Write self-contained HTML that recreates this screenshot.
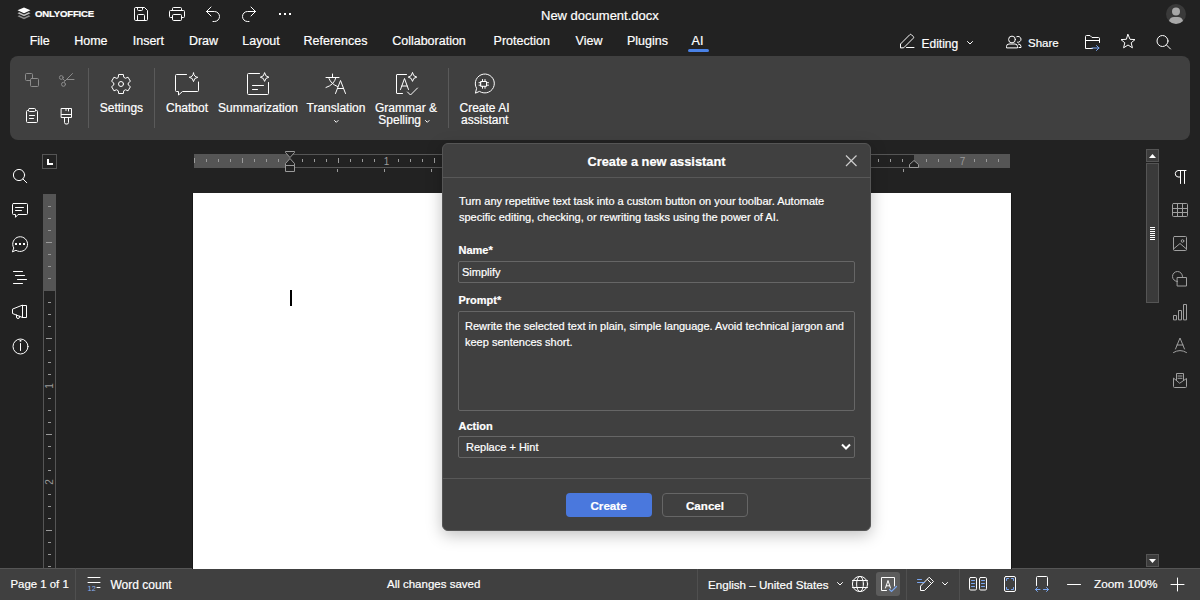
<!DOCTYPE html>
<html><head><meta charset="utf-8">
<style>
*{margin:0;padding:0;box-sizing:border-box}
html,body{width:1200px;height:600px;overflow:hidden;background:#222;font-family:"Liberation Sans",sans-serif;color:#fff}
.a{position:absolute}
.t{position:absolute;white-space:nowrap;line-height:1;-webkit-text-stroke:0.2px #fff}
.c{width:120px;text-align:center}
svg{position:absolute;overflow:visible}
.ic{fill:none;stroke:#fff;stroke-width:1;stroke-linecap:round;stroke-linejoin:round}
</style></head><body>
<!-- TOP HEADER -->
<div id="hdr">
  <svg class="a" style="left:17px;top:7px" width="14" height="13" viewBox="0 0 14 13">
    <path d="M7 0.5 L13.5 3.3 L7 6.2 L0.5 3.3 Z" fill="#fff"/>
    <path d="M2.2 5.3 L7 7.4 L11.8 5.3 L13.5 6.3 L7 9.2 L0.5 6.3 Z" fill="#ddd" opacity=".85"/>
    <path d="M2.2 8.3 L7 10.4 L11.8 8.3 L13.5 9.3 L7 12.2 L0.5 9.3 Z" fill="#bbb" opacity=".7"/>
  </svg>
  <div class="t" style="left:35px;top:9.1px;font-size:9.6px;font-weight:bold;letter-spacing:-0.2px">ONLYOFFICE</div>
  <div class="t" style="left:541px;top:9px;font-size:13px;">New document.docx</div>
</div>
<!-- MENU -->
<div class="t c" style="left:-20.25px;top:35px;font-size:12.5px">File</div>
<div class="t c" style="left:30.90px;top:35px;font-size:12.5px">Home</div>
<div class="t c" style="left:88.35px;top:35px;font-size:12.5px">Insert</div>
<div class="t c" style="left:143.50px;top:35px;font-size:12.5px">Draw</div>
<div class="t c" style="left:201.00px;top:35px;font-size:12.5px">Layout</div>
<div class="t c" style="left:275.50px;top:35px;font-size:12.5px">References</div>
<div class="t c" style="left:369.00px;top:35px;font-size:12.5px">Collaboration</div>
<div class="t c" style="left:461.70px;top:35px;font-size:12.5px">Protection</div>
<div class="t c" style="left:529.00px;top:35px;font-size:12.5px">View</div>
<div class="t c" style="left:587.50px;top:35px;font-size:12.5px">Plugins</div>
<div class="t c" style="left:637.50px;top:35px;font-size:12.5px">AI</div>
<div class="a" style="left:688px;top:49px;width:21px;height:3px;border-radius:2px;background:#4a82e6"></div>

<div class="t" style="left:921.5px;top:37.7px;font-size:12px">Editing</div>
<div class="t" style="left:1028px;top:37.7px;font-size:11.5px">Share</div>


<!-- HEADER ICONS -->
<svg style="left:0;top:0" width="1200" height="140" viewBox="0 0 1200 140">
 <g class="ic">
  <!-- save -->
  <path d="M134.5 8.5 Q134.5 7.5 135.5 7.5 L144.5 7.5 L147.5 10.5 L147.5 19.5 Q147.5 20.5 146.5 20.5 L135.5 20.5 Q134.5 20.5 134.5 19.5 Z"/>
  <path d="M137.5 7.5 V9.5 Q137.5 10.5 138.5 10.5 H141.5 Q142.5 10.5 142.5 9.5 V7.5"/>
  <path d="M137.5 20.5 V15.5 Q137.5 14.5 138.5 14.5 H143.5 Q144.5 14.5 144.5 15.5 V20.5"/>
  <!-- print -->
  <path d="M172.5 10.5 V8.5 Q172.5 7.5 173.5 7.5 H180.5 Q181.5 7.5 181.5 8.5 V10.5"/>
  <path d="M172.5 17.5 H170.5 Q169.5 17.5 169.5 16.5 V11.5 Q169.5 10.5 170.5 10.5 H183.5 Q184.5 10.5 184.5 11.5 V16.5 Q184.5 17.5 183.5 17.5 H181.5"/>
  <path d="M172.5 15.5 Q172.5 14.5 173.5 14.5 H180.5 Q181.5 14.5 181.5 15.5 V19.5 Q181.5 20.5 180.5 20.5 H173.5 Q172.5 20.5 172.5 19.5 Z"/>
  <!-- undo -->
  <path d="M211 7 L206.5 11.5 L211 16 M206.5 11.5 H214.5 A5 5 0 0 1 214.5 21.5 H213"/>
  <!-- redo -->
  <path d="M251 7 L255.5 11.5 L251 16 M255.5 11.5 H247.5 A5 5 0 0 0 247.5 21.5 H249"/>
 </g>
 <g fill="#fff">
  <rect x="279" y="13" width="2" height="2"/><rect x="284" y="13" width="2" height="2"/><rect x="289" y="13" width="2" height="2"/>
 </g>
 <g class="ic">
  <!-- edit pencil -->
  <path d="M900.5 47.5 V44 L909.8 34.7 Q910.6 33.9 911.4 34.7 L913.3 36.6 Q914.1 37.4 913.3 38.2 L904 47.5 Z M906.5 47.5 H914"/>
  <path d="M967.5 41.5 L970 44 L972.5 41.5"/>
  <!-- share people -->
  <circle cx="1012" cy="39.5" r="3.4"/>
  <path d="M1006.5 47.5 V46.5 Q1006.5 44 1009 44 H1015 Q1017.5 44 1017.5 46.5 V47.5 Z"/>
  <path d="M1016.8 36.6 A3 3 0 1 1 1017.5 42.3"/>
  <path d="M1018.5 44 Q1021 44 1021 46.5 V47.5 H1019"/>
  <!-- folder -->
  <path d="M1092.5 48.5 H1085.5 V36.5 Q1085.5 35.5 1086.5 35.5 H1090 L1092 37.5 H1098.5 Q1099.5 37.5 1099.5 38.5 V42.5 M1085.5 40.5 H1099.5"/>
  <!-- star -->
  <path d="M1128 34.5 L1130 39.3 L1135 39.6 L1131.2 42.8 L1132.4 47.8 L1128 45 L1123.6 47.8 L1124.8 42.8 L1121 39.6 L1126 39.3 Z"/>
  <!-- search -->
  <circle cx="1162.5" cy="41" r="5.5"/>
  <path d="M1166.5 45 L1170.5 49"/>
 </g>
 <path d="M1092 48 H1099 M1096.5 45.5 L1099 48 L1096.5 50.5" fill="none" stroke="#7aa6f0" stroke-width="1" stroke-linecap="round" stroke-linejoin="round"/>
 <!-- avatar -->
 <circle cx="1176" cy="14" r="10" fill="#3a3a3a"/>
 <circle cx="1176" cy="11.5" r="4" fill="#a8a8a8"/>
 <path d="M1169 21 Q1170 17 1174 17 H1178 Q1182 17 1183 21 Q1180 24 1176 24 Q1172 24 1169 21 Z" fill="#a8a8a8"/>
</svg>

<!-- TOOLBAR PANEL -->
<div class="a" style="left:10px;top:56px;width:1180px;height:84px;background:#404040;border-radius:8px"></div>
<div class="a" style="left:88px;top:68px;width:1px;height:60px;background:#5a5a5a"></div>
<div class="a" style="left:154px;top:68px;width:1px;height:60px;background:#5a5a5a"></div>
<div class="a" style="left:448px;top:68px;width:1px;height:60px;background:#5a5a5a"></div>

<div class="t c" style="left:61.40px;top:101.5px;font-size:12px">Settings</div>
<div class="t c" style="left:127.00px;top:101.5px;font-size:12px">Chatbot</div>
<div class="t c" style="left:198.00px;top:101.5px;font-size:12px">Summarization</div>
<div class="t c" style="left:276.00px;top:101.5px;font-size:12px">Translation</div>
<div class="t c" style="left:346.00px;top:101.5px;font-size:12px">Grammar &amp;</div>
<div class="t c" style="left:339.70px;top:113.5px;font-size:12px">Spelling</div>
<div class="t c" style="left:424.50px;top:101.5px;font-size:12px">Create AI</div>
<div class="t c" style="left:424.75px;top:113.5px;font-size:12px">assistant</div>



<!-- TOOLBAR ICONS -->
<svg style="left:0;top:0" width="600" height="140" viewBox="0 0 600 140">
 <g class="ic" style="stroke:#8c8c8c">
  <!-- copy disabled -->
  <path d="M30.5 80.5 H26.5 Q25.5 80.5 25.5 79.5 V74.5 Q25.5 73.5 26.5 73.5 H31.5 Q32.5 73.5 32.5 74.5 V78"/>
  <rect x="30.5" y="78.5" width="8" height="8" rx="1"/>
  <!-- cut -->
  <circle cx="61.3" cy="77.5" r="1.9"/>
  <circle cx="63.5" cy="84.3" r="2"/>
  <path d="M63 79 L64.5 80.5 M64.5 81.5 L72.5 73.5 M67.5 79.5 H74"/>
 </g>
 <g class="ic">
  <!-- paste clipboard -->
  <path d="M28.5 110.5 H27.5 Q26.5 110.5 26.5 111.5 V121.5 Q26.5 122.5 27.5 122.5 H36.5 Q37.5 122.5 37.5 121.5 V111.5 Q37.5 110.5 36.5 110.5 H35.5"/>
  <rect x="28.5" y="108.5" width="7" height="3" rx="1"/>
  <path d="M29.5 115.5 H34.5 M29.5 118.5 H33.5"/>
  <!-- format painter -->
  <path d="M61.5 108.5 H71.5 V117.5 H61.5 Z M61.5 114.5 H71.5 M68.5 108.5 V111 M66 108.5 V110.5"/>
  <path d="M64.5 117.5 V122.5 Q64.5 124 66 124 H67 Q68.5 124 68.5 122.5 V117.5"/>
  <!-- gear -->
  <path d="M118.27 77.23 L118.63 74.49 L123.37 74.49 L123.73 77.23 L125.49 78.25 L128.05 77.19 L130.42 81.30 L128.23 82.98 L128.23 85.02 L130.42 86.70 L128.05 90.81 L125.49 89.75 L123.73 90.77 L123.37 93.51 L118.63 93.51 L118.27 90.77 L116.51 89.75 L113.95 90.81 L111.58 86.70 L113.77 85.02 L113.77 82.98 L111.58 81.30 L113.95 77.19 L116.51 78.25 Z"/>
  <circle cx="121" cy="84" r="2.5"/>
  <!-- chatbot -->
  <path d="M186.5 74.5 H176.5 Q175.5 74.5 175.5 75.5 V90.5 Q175.5 91.5 176.5 91.5 H178.5 V95 L182.5 91.5 H197.5 Q198.5 91.5 198.5 90.5 V82"/>
  <path d="M193.5 73 Q194 77 197.8 77.3 Q194 77.6 193.5 81.6 Q193 77.6 189.2 77.3 Q193 77 193.5 73 Z"/>
  <!-- summarization -->
  <path d="M259.5 73.5 H248.5 Q247.5 73.5 247.5 74.5 V93.5 Q247.5 94.5 248.5 94.5 H267.5 Q268.5 94.5 268.5 93.5 V82.5"/>
  <path d="M264.6 73 Q265.1 76.8 268.9 77.2 Q265.1 77.6 264.6 81.4 Q264.1 77.6 260.3 77.2 Q264.1 76.8 264.6 73 Z"/>
  <path d="M252.5 85.5 H263.5 M252.5 89.5 H257.5"/>
  <!-- translation -->
  <path d="M326 77.5 H339 M332.5 74 V77.5 M329 78.5 Q331 84 337.5 86.5 M336 77.5 Q334 85 326 87.5"/>
  <path d="M335.5 93.5 L340.5 80.5 L345.5 93.5 M337.5 88.5 H343.5"/>
  <!-- grammar -->
  <path d="M406.5 74.5 H397 Q396.5 74.5 396.5 75 V93 Q396.5 93.5 397 93.5 H402.5"/>
  <path d="M400.5 89.5 L404.5 78.5 L408.5 89.5 M401.8 86 H407.2"/>
  <path d="M412.5 72.8 Q413 76.6 416.8 77.1 Q413 77.6 412.5 81.4 Q412 77.6 408.2 77.1 Q412 76.6 412.5 72.8 Z"/>
  <path d="M407.5 92 L410.5 95 L417.5 88"/>
  <!-- create ai -->
  <path d="M475.5 92.8 L476.6 88.3 A9.5 9.5 0 1 1 479.8 91.6 Z"/>
  <rect x="481" y="81.5" width="5.5" height="4.8"/>
  <path d="M482.5 79.5 V81.5 M485 79.5 V81.5 M482.5 86.3 V88.3 M485 86.3 V88.3 M479 82.7 H481 M479 85.2 H481 M486.5 82.7 H488.5 M486.5 85.2 H488.5"/>
  <!-- chevrons -->
  <path d="M334.5 120.5 L336.3 122.3 L338.1 120.5 M425.5 120.5 L427.3 122.3 L429.1 120.5"/>
 </g>
</svg>

<!-- STATUS BAR -->
<div class="a" style="left:0;top:568px;width:1200px;height:32px;background:#404040;border-top:1px solid #565656"></div>
<div class="t" style="left:10.5px;top:579.2px;font-size:11.4px">Page 1 of 1</div>
<div class="a" style="left:75px;top:568px;width:1px;height:32px;background:#4f4f4f"></div>
<div class="t" style="left:110.5px;top:579px;font-size:12px">Word count</div>
<div class="t" style="left:387px;top:579.2px;font-size:11.5px">All changes saved</div>
<div class="a" style="left:697px;top:568px;width:1px;height:32px;background:#4f4f4f"></div>
<div class="t" style="left:708px;top:579.2px;font-size:11.6px">English – United States</div>
<div class="a" style="left:906px;top:568px;width:1px;height:32px;background:#4f4f4f"></div>
<div class="a" style="left:959px;top:568px;width:1px;height:32px;background:#4f4f4f"></div>
<div class="t" style="left:1094px;top:579.2px;font-size:11.8px">Zoom 100%</div>


<!-- LEFT SIDEBAR ICONS -->
<svg style="left:0;top:140px" width="60" height="430" viewBox="0 140 60 430">
 <g class="ic">
  <circle cx="19" cy="175" r="5.6"/>
  <path d="M23 179 L26.8 182.8"/>
  <!-- comment -->
  <path d="M13.5 203.5 H26.5 Q27.5 203.5 27.5 204.5 V213.5 Q27.5 214.5 26.5 214.5 H18 L15.5 217.3 V214.5 H13.5 Q12.5 214.5 12.5 213.5 V204.5 Q12.5 203.5 13.5 203.5 Z M15.5 207.5 H23.5 M15.5 210.5 H21.5"/>
  <!-- chat -->
  <path d="M12.5 251.5 L13.8 248 A7.4 7.4 0 1 1 16.3 250.5 Z"/>
  <!-- navigation -->
  <path d="M13.5 271.5 H22.5 M15.5 275.5 H24.5 M17.5 279.5 H26.5 M13.5 283.5 H22.5"/>
  <!-- megaphone -->
  <path d="M12.5 309.5 V313.5 L22.5 317.5 V305.5 Z M22.5 305.5 H26.5 V317.5 H22.5 M16.5 315 V317 Q16.5 318.5 18 318.5 Q19.5 318.5 19.5 317 V316.2"/>
  <!-- info -->
  <circle cx="20.5" cy="346.5" r="7.5"/>
  <path d="M20.5 343.5 V350.5"/>
 </g>
 <g fill="#fff"><rect x="15" y="243" width="2" height="2"/><rect x="19" y="243" width="2" height="2"/><rect x="23" y="243" width="2" height="2"/></g>
 <circle cx="20.5" cy="340.8" r="1" fill="#fff"/>
</svg>

<!-- TAB SELECTOR -->
<div class="a" style="left:42px;top:154px;width:15px;height:15px;border:1px solid #555"></div>
<div class="a" style="left:47px;top:159px;width:2px;height:6px;background:#fff"></div>
<div class="a" style="left:47px;top:163px;width:6px;height:2px;background:#fff"></div>

<!-- TOP RULER -->
<div class="a" style="left:194px;top:154px;width:816px;height:14px;background:#222;border-top:1px solid #555;border-bottom:1px solid #555"></div>
<div class="a" style="left:194px;top:154px;width:96px;height:14px;background:#555"></div>
<div class="a" style="left:914px;top:154px;width:96px;height:14px;background:#555"></div>
<svg style="left:0;top:140px" width="1200" height="40" viewBox="0 140 1200 40" id="rulerT"><rect x="206" y="159" width="1" height="3" fill="#9a9a9a"/><rect x="218" y="159" width="1" height="3" fill="#9a9a9a"/><rect x="230" y="159" width="1" height="3" fill="#9a9a9a"/><rect x="242" y="158" width="1" height="5" fill="#9a9a9a"/><rect x="254" y="159" width="1" height="3" fill="#9a9a9a"/><rect x="266" y="159" width="1" height="3" fill="#9a9a9a"/><rect x="278" y="159" width="1" height="3" fill="#9a9a9a"/><rect x="302" y="159" width="1" height="3" fill="#9a9a9a"/><rect x="314" y="159" width="1" height="3" fill="#9a9a9a"/><rect x="326" y="159" width="1" height="3" fill="#9a9a9a"/><rect x="338" y="158" width="1" height="5" fill="#9a9a9a"/><rect x="350" y="159" width="1" height="3" fill="#9a9a9a"/><rect x="362" y="159" width="1" height="3" fill="#9a9a9a"/><rect x="374" y="159" width="1" height="3" fill="#9a9a9a"/><rect x="398" y="159" width="1" height="3" fill="#9a9a9a"/><rect x="410" y="159" width="1" height="3" fill="#9a9a9a"/><rect x="422" y="159" width="1" height="3" fill="#9a9a9a"/><rect x="434" y="158" width="1" height="5" fill="#9a9a9a"/><rect x="446" y="159" width="1" height="3" fill="#9a9a9a"/><rect x="458" y="159" width="1" height="3" fill="#9a9a9a"/><rect x="470" y="159" width="1" height="3" fill="#9a9a9a"/><rect x="494" y="159" width="1" height="3" fill="#9a9a9a"/><rect x="506" y="159" width="1" height="3" fill="#9a9a9a"/><rect x="518" y="159" width="1" height="3" fill="#9a9a9a"/><rect x="530" y="158" width="1" height="5" fill="#9a9a9a"/><rect x="542" y="159" width="1" height="3" fill="#9a9a9a"/><rect x="554" y="159" width="1" height="3" fill="#9a9a9a"/><rect x="566" y="159" width="1" height="3" fill="#9a9a9a"/><rect x="590" y="159" width="1" height="3" fill="#9a9a9a"/><rect x="602" y="159" width="1" height="3" fill="#9a9a9a"/><rect x="614" y="159" width="1" height="3" fill="#9a9a9a"/><rect x="626" y="158" width="1" height="5" fill="#9a9a9a"/><rect x="638" y="159" width="1" height="3" fill="#9a9a9a"/><rect x="650" y="159" width="1" height="3" fill="#9a9a9a"/><rect x="662" y="159" width="1" height="3" fill="#9a9a9a"/><rect x="686" y="159" width="1" height="3" fill="#9a9a9a"/><rect x="698" y="159" width="1" height="3" fill="#9a9a9a"/><rect x="710" y="159" width="1" height="3" fill="#9a9a9a"/><rect x="722" y="158" width="1" height="5" fill="#9a9a9a"/><rect x="734" y="159" width="1" height="3" fill="#9a9a9a"/><rect x="746" y="159" width="1" height="3" fill="#9a9a9a"/><rect x="758" y="159" width="1" height="3" fill="#9a9a9a"/><rect x="782" y="159" width="1" height="3" fill="#9a9a9a"/><rect x="794" y="159" width="1" height="3" fill="#9a9a9a"/><rect x="806" y="159" width="1" height="3" fill="#9a9a9a"/><rect x="818" y="158" width="1" height="5" fill="#9a9a9a"/><rect x="830" y="159" width="1" height="3" fill="#9a9a9a"/><rect x="842" y="159" width="1" height="3" fill="#9a9a9a"/><rect x="854" y="159" width="1" height="3" fill="#9a9a9a"/><rect x="878" y="159" width="1" height="3" fill="#9a9a9a"/><rect x="890" y="159" width="1" height="3" fill="#9a9a9a"/><rect x="902" y="159" width="1" height="3" fill="#9a9a9a"/><rect x="926" y="159" width="1" height="3" fill="#9a9a9a"/><rect x="938" y="159" width="1" height="3" fill="#9a9a9a"/><rect x="950" y="159" width="1" height="3" fill="#9a9a9a"/><rect x="974" y="159" width="1" height="3" fill="#9a9a9a"/><rect x="986" y="159" width="1" height="3" fill="#9a9a9a"/><rect x="998" y="159" width="1" height="3" fill="#9a9a9a"/><text x="386.5" y="165" font-size="10" fill="#9a9a9a" text-anchor="middle" font-family="Liberation Sans">1</text><text x="482.5" y="165" font-size="10" fill="#9a9a9a" text-anchor="middle" font-family="Liberation Sans">2</text><text x="578.5" y="165" font-size="10" fill="#9a9a9a" text-anchor="middle" font-family="Liberation Sans">3</text><text x="674.5" y="165" font-size="10" fill="#9a9a9a" text-anchor="middle" font-family="Liberation Sans">4</text><text x="770.5" y="165" font-size="10" fill="#9a9a9a" text-anchor="middle" font-family="Liberation Sans">5</text><text x="866.5" y="165" font-size="10" fill="#9a9a9a" text-anchor="middle" font-family="Liberation Sans">6</text><text x="962.5" y="165" font-size="10" fill="#9a9a9a" text-anchor="middle" font-family="Liberation Sans">7</text><rect x="194" y="158" width="1" height="5" fill="#9a9a9a"/><rect x="337" y="169" width="1" height="3" fill="#9a9a9a"/><rect x="384" y="169" width="1" height="3" fill="#9a9a9a"/><rect x="431" y="169" width="1" height="3" fill="#9a9a9a"/><rect x="478" y="169" width="1" height="3" fill="#9a9a9a"/><rect x="526" y="169" width="1" height="3" fill="#9a9a9a"/><rect x="573" y="169" width="1" height="3" fill="#9a9a9a"/><rect x="620" y="169" width="1" height="3" fill="#9a9a9a"/><rect x="667" y="169" width="1" height="3" fill="#9a9a9a"/><rect x="714" y="169" width="1" height="3" fill="#9a9a9a"/><rect x="762" y="169" width="1" height="3" fill="#9a9a9a"/><rect x="809" y="169" width="1" height="3" fill="#9a9a9a"/><rect x="856" y="169" width="1" height="3" fill="#9a9a9a"/><rect x="903" y="169" width="1" height="3" fill="#9a9a9a"/><path d="M285.5 151.5 H294.5 V152.5 L290 157.5 L285.5 152.5 Z M290 158.5 L294.5 163.5 V165.5 H285.5 V163.5 Z M285.5 165.5 H294.5 V171.5 H285.5 Z" fill="#222" stroke="#9a9a9a" stroke-width="1"/><path d="M909.5 167.5 V164.5 L914 160.5 L918.5 164.5 V167.5 Z" fill="#222" stroke="#9a9a9a" stroke-width="1"/></svg>

<!-- LEFT RULER -->
<div class="a" style="left:43px;top:194px;width:13px;height:374px;background:#222;border-left:1px solid #555;border-right:1px solid #555"></div>
<div class="a" style="left:43px;top:194px;width:13px;height:97px;background:#555"></div>
<svg style="left:0;top:190px" width="60" height="380" viewBox="0 190 60 380" id="rulerL"><rect x="48" y="206" width="3" height="1" fill="#9a9a9a"/><rect x="48" y="218" width="3" height="1" fill="#9a9a9a"/><rect x="48" y="230" width="3" height="1" fill="#9a9a9a"/><rect x="46" y="242" width="6" height="1" fill="#9a9a9a"/><rect x="48" y="254" width="3" height="1" fill="#9a9a9a"/><rect x="48" y="266" width="3" height="1" fill="#9a9a9a"/><rect x="48" y="278" width="3" height="1" fill="#9a9a9a"/><rect x="48" y="302" width="3" height="1" fill="#9a9a9a"/><rect x="48" y="314" width="3" height="1" fill="#9a9a9a"/><rect x="48" y="326" width="3" height="1" fill="#9a9a9a"/><rect x="46" y="338" width="6" height="1" fill="#9a9a9a"/><rect x="48" y="350" width="3" height="1" fill="#9a9a9a"/><rect x="48" y="362" width="3" height="1" fill="#9a9a9a"/><rect x="48" y="374" width="3" height="1" fill="#9a9a9a"/><rect x="48" y="398" width="3" height="1" fill="#9a9a9a"/><rect x="48" y="410" width="3" height="1" fill="#9a9a9a"/><rect x="48" y="422" width="3" height="1" fill="#9a9a9a"/><rect x="46" y="434" width="6" height="1" fill="#9a9a9a"/><rect x="48" y="446" width="3" height="1" fill="#9a9a9a"/><rect x="48" y="458" width="3" height="1" fill="#9a9a9a"/><rect x="48" y="470" width="3" height="1" fill="#9a9a9a"/><rect x="48" y="494" width="3" height="1" fill="#9a9a9a"/><rect x="48" y="506" width="3" height="1" fill="#9a9a9a"/><rect x="48" y="518" width="3" height="1" fill="#9a9a9a"/><rect x="46" y="530" width="6" height="1" fill="#9a9a9a"/><rect x="48" y="542" width="3" height="1" fill="#9a9a9a"/><rect x="48" y="554" width="3" height="1" fill="#9a9a9a"/><rect x="48" y="566" width="3" height="1" fill="#9a9a9a"/><text transform="translate(53 386) rotate(-90)" x="0" y="0" font-size="10" fill="#9a9a9a" text-anchor="middle" font-family="Liberation Sans">1</text><text transform="translate(53 482) rotate(-90)" x="0" y="0" font-size="10" fill="#9a9a9a" text-anchor="middle" font-family="Liberation Sans">2</text></svg>

<!-- SCROLLBAR -->
<div class="a" style="left:1146px;top:149px;width:13px;height:13px;border:1px solid #555;background:#3c3c3c"></div>
<svg style="left:1146px;top:149px" width="13" height="13"><path d="M3 9 L6.5 5 L10 9 Z" fill="#fff"/></svg>
<div class="a" style="left:1146px;top:163px;width:13px;height:140px;border:1px solid #555;background:#3a3a3a"></div>
<svg style="left:1146px;top:226px" width="13" height="16"><g stroke="#fff" stroke-width="1"><path d="M4 1.5 H9 M4 3.5 H9 M4 5.5 H9 M4 7.5 H9 M4 9.5 H9 M4 11.5 H9 M4 13.5 H9"/></g></svg>
<div class="a" style="left:1146px;top:554px;width:13px;height:13px;border:1px solid #555;background:#3c3c3c"></div>
<svg style="left:1146px;top:554px" width="13" height="13"><path d="M3 5 L6.5 9 L10 5 Z" fill="#fff"/></svg>

<!-- RIGHT SIDEBAR ICONS -->
<svg style="left:1160px;top:160px" width="40" height="240" viewBox="1160 160 40 240">
 <g class="ic">
  <!-- pilcrow -->
  <path d="M1180.5 170.5 V183.5 M1184.5 170.5 V183.5 M1186 170.5 H1178 A3.3 3.3 0 0 0 1178 177 H1180.5"/>
 </g>
 <g class="ic" style="stroke:#a0a0a0">
  <!-- table -->
  <rect x="1172.5" y="203.5" width="15" height="13" rx="1"/>
  <path d="M1172.5 208.5 H1187.5 M1172.5 212.5 H1187.5 M1177.5 203.5 V216.5 M1182.5 203.5 V216.5"/>
  <!-- image -->
  <rect x="1173.5" y="236.5" width="13" height="14" rx="1"/>
  <path d="M1173.5 249 L1180 243.5 L1186.5 249"/>
  <circle cx="1182.5" cy="241" r="1.3"/>
  <!-- shapes -->
  <path d="M1177.5 281.5 A5 5 0 1 1 1182.5 276.5"/>
  <rect x="1177.5" y="277.5" width="9" height="8.5"/>
  <!-- chart -->
  <path d="M1173.5 319.5 V315.5 H1176.5 V319.5 Z M1178.5 319.5 V310.5 H1181.5 V319.5 Z M1183.5 319.5 V304.5 H1186.5 V319.5 Z"/>
  <!-- text art -->
  <path d="M1175.5 349 L1180 338 L1184.5 349 M1177 345 H1183 M1173.5 352.5 Q1180 348.5 1186.5 352.5"/>
  <!-- mail merge -->
  <path d="M1173.5 378.5 V386.5 Q1173.5 387.5 1174.5 387.5 H1185.5 Q1186.5 387.5 1186.5 386.5 V378.5 L1180 383 Z M1176.5 380.5 V373.5 H1183.5 V380.5 M1178 376 H1182 M1178 378.3 H1182"/>
 </g>
</svg>

<!-- STATUS BAR ICONS -->
<svg style="left:0;top:568px" width="1200" height="32" viewBox="0 568 1200 32">
 <g class="ic">
  <path d="M88 577.5 H100 M88 582.5 H100"/>
  <path d="M97 587.5 H100"/>
  <!-- globe -->
  <circle cx="860" cy="584" r="7.6"/>
  <ellipse cx="860" cy="584" rx="3.4" ry="7.6"/>
  <path d="M852.5 580.5 H867.5 M852.5 587.5 H867.5"/>
  <path d="M837.5 582.5 L840 585 L842.5 582.5 M942.5 582.5 L945 585 L947.5 582.5"/>
  <!-- track changes pencil -->
  <path d="M920.5 586.5 V590.5 H924.5 L933.5 581.5 L929.5 577.5 Z M927.5 579.5 L931.5 583.5"/>
  <!-- two pages -->
  <rect x="969.5" y="577.5" width="7" height="12.5" rx="1.2"/>
  <rect x="979.5" y="577.5" width="7" height="12.5" rx="1.2"/>
  <!-- fit page -->
  <rect x="1004.5" y="576.5" width="11" height="15" rx="1.5"/>
  <!-- fit width -->
  <path d="M1036.5 585.5 V577.5 Q1036.5 576.5 1037.5 576.5 H1046.5 Q1047.5 576.5 1047.5 577.5 V585.5"/>
  <!-- minus / plus -->
  <path d="M1067.5 584.5 H1080.5 M1171 584.5 H1184 M1177.5 578 V591"/>
 </g>
 <g fill="none" stroke="#7aa6f0" stroke-width="1" stroke-linecap="round" stroke-linejoin="round">
  <path d="M917.5 579.5 H921.5 M917.5 582.5 H924.5"/>
  <path d="M971.5 580.5 H974.5 M971.5 583.5 H974.5 M971.5 586.5 H974.5 M981.5 580.5 H984.5 M981.5 583.5 H984.5 M981.5 586.5 H984.5"/>
  <path d="M1006.5 580.5 V578.5 H1008.5 M1011.5 578.5 H1013.5 V580.5 M1013.5 587.5 V589.5 H1011.5 M1008.5 589.5 H1006.5 V587.5"/>
  <path d="M1035.5 589.5 H1040 M1037.5 587.5 L1035.5 589.5 L1037.5 591.5 M1043.5 589.5 H1048.5 M1046.5 587.5 L1048.5 589.5 L1046.5 591.5"/>
 </g>
 <text x="87.5" y="590.5" font-size="7.2" fill="#8ab0f0" font-family="Liberation Sans" letter-spacing="0.3">12</text>
 <!-- spellcheck button -->
 <rect x="876" y="572" width="24" height="24" rx="3" fill="#5c5c5c"/>
 <g class="ic">
  <path d="M886.5 590.5 H881.5 V577.5 H894.5 V586"/>
  <path d="M885.5 588 L888 580.5 L890.5 588 M886.3 585.8 H889.7"/>
 </g>
 <path d="M889.5 589.5 L891.5 591.5 L896.5 586.5" fill="none" stroke="#7aa6f0" stroke-width="1.2" stroke-linecap="round"/>
</svg>

<!-- DIALOG EXTRAS -->

<!-- PAGE -->
<div class="a" style="left:193px;top:193px;width:818px;height:376px;background:#fff;box-shadow:-1px 0 0 #181818, 1px 0 0 #181818"></div>
<div class="a" style="left:290px;top:290px;width:2px;height:16px;background:#000"></div>

<!-- DIALOG -->
<div class="a" style="left:442px;top:143px;width:429px;height:388px;background:#404040;border:1px solid #555;border-radius:6px;box-shadow:0 4px 16px rgba(0,0,0,.25)"></div>
<div class="a" style="left:442px;top:176.5px;width:429px;height:1px;background:#585858"></div>
<div class="t" style="left:587.5px;top:156px;font-size:12.8px;font-weight:bold">Create a new assistant</div>
<div class="t" style="left:459px;top:192.7px;font-size:11px;line-height:16px">Turn any repetitive text task into a custom button on your toolbar. Automate<br>specific editing, checking, or rewriting tasks using the power of AI.</div>
<div class="t" style="left:458.5px;top:244.5px;font-size:11px;font-weight:bold">Name*</div>
<div class="a" style="left:458px;top:261px;width:397px;height:22px;border:1px solid #666;border-radius:2px"></div>
<div class="t" style="left:462px;top:267px;font-size:11px">Simplify</div>
<div class="t" style="left:458.5px;top:294.8px;font-size:11px;font-weight:bold">Prompt*</div>
<div class="a" style="left:458px;top:311px;width:397px;height:100px;border:1px solid #666;border-radius:2px"></div>
<div class="t" style="left:465px;top:318px;font-size:11px;line-height:16px">Rewrite the selected text in plain, simple language. Avoid technical jargon and<br>keep sentences short.</div>
<div class="t" style="left:458.5px;top:421px;font-size:11px;font-weight:bold">Action</div>
<div class="a" style="left:458px;top:436px;width:397px;height:22px;border:1px solid #666;border-radius:2px"></div>
<div class="t" style="left:466px;top:441.7px;font-size:11px">Replace + Hint</div>
<div class="a" style="left:442px;top:478px;width:429px;height:1px;background:#585858"></div>
<div class="a" style="left:566px;top:493px;width:86px;height:24px;background:#4a78dd;border-radius:4px"></div>
<div class="t" style="left:590.5px;top:500px;font-size:11.6px;font-weight:bold">Create</div>
<div class="a" style="left:662px;top:493px;width:86px;height:24px;border:1px solid #666;border-radius:4px"></div>
<div class="t" style="left:686px;top:500px;font-size:11.6px;font-weight:bold">Cancel</div>
<svg style="left:840px;top:150px" width="30" height="30" viewBox="840 150 30 30"><path d="M846 155.5 L856.5 166 M856.5 155.5 L846 166" stroke="#ccc" stroke-width="1.2" fill="none"/></svg>
<svg style="left:835px;top:440px" width="20" height="16" viewBox="835 440 20 16"><path d="M842 444.5 L846 448.5 L850 444.5" stroke="#fff" stroke-width="2" fill="none"/></svg>
</body></html>
